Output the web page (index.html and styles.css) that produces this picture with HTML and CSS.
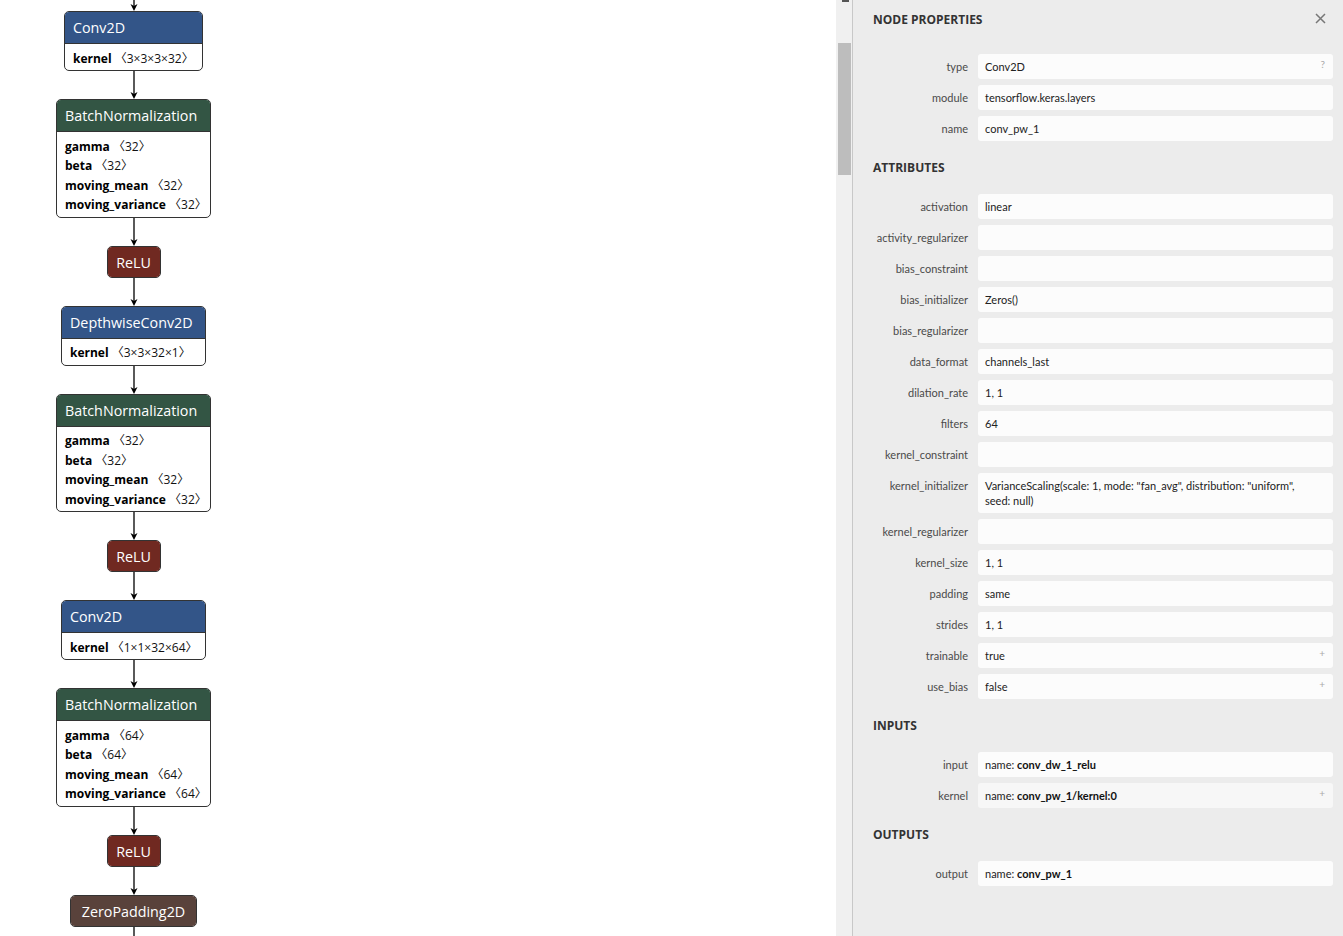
FILE: index.html
```html
<!DOCTYPE html>
<html lang="en">
<head>
<meta charset="utf-8">
<title>Netron - conv_pw_1</title>
<link rel="stylesheet" href="styles.css">
</head>
<body>
<div class="app">
  <main class="graph">
    <div class="flow">
      <svg class="edge edge--top" width="10" height="11" viewBox="0 0 10 11"><line x1="5" y1="0" x2="5" y2="8" /><path d="M1.5 4 L5 11 L8.5 4 L5 6 Z" /></svg>

      <div class="node node--conv1">
        <div class="node-head head--layer">Conv2D</div>
        <div class="node-body"><div class="attr"><b>kernel</b> <span class="shape">〈3×3×3×32〉</span></div></div>
      </div>
      <svg class="edge" width="10" height="28" viewBox="0 0 10 28"><line x1="5" y1="0" x2="5" y2="25" /><path d="M1.5 21 L5 28 L8.5 21 L5 23 Z" /></svg>

      <div class="node node--bn">
        <div class="node-head head--norm">BatchNormalization</div>
        <div class="node-body">
          <div class="attr"><b>gamma</b> <span class="shape">〈32〉</span></div>
          <div class="attr"><b>beta</b> <span class="shape">〈32〉</span></div>
          <div class="attr"><b>moving_mean</b> <span class="shape">〈32〉</span></div>
          <div class="attr"><b>moving_variance</b> <span class="shape">〈32〉</span></div>
        </div>
      </div>
      <svg class="edge" width="10" height="28" viewBox="0 0 10 28"><line x1="5" y1="0" x2="5" y2="25" /><path d="M1.5 21 L5 28 L8.5 21 L5 23 Z" /></svg>

      <div class="node node--relu">
        <div class="node-head head--act head--solo">ReLU</div>
      </div>
      <svg class="edge" width="10" height="28" viewBox="0 0 10 28"><line x1="5" y1="0" x2="5" y2="25" /><path d="M1.5 21 L5 28 L8.5 21 L5 23 Z" /></svg>

      <div class="node node--dw">
        <div class="node-head head--layer">DepthwiseConv2D</div>
        <div class="node-body"><div class="attr"><b>kernel</b> <span class="shape">〈3×3×32×1〉</span></div></div>
      </div>
      <svg class="edge" width="10" height="28" viewBox="0 0 10 28"><line x1="5" y1="0" x2="5" y2="25" /><path d="M1.5 21 L5 28 L8.5 21 L5 23 Z" /></svg>

      <div class="node node--bn">
        <div class="node-head head--norm">BatchNormalization</div>
        <div class="node-body">
          <div class="attr"><b>gamma</b> <span class="shape">〈32〉</span></div>
          <div class="attr"><b>beta</b> <span class="shape">〈32〉</span></div>
          <div class="attr"><b>moving_mean</b> <span class="shape">〈32〉</span></div>
          <div class="attr"><b>moving_variance</b> <span class="shape">〈32〉</span></div>
        </div>
      </div>
      <svg class="edge" width="10" height="28" viewBox="0 0 10 28"><line x1="5" y1="0" x2="5" y2="25" /><path d="M1.5 21 L5 28 L8.5 21 L5 23 Z" /></svg>

      <div class="node node--relu">
        <div class="node-head head--act head--solo">ReLU</div>
      </div>
      <svg class="edge" width="10" height="28" viewBox="0 0 10 28"><line x1="5" y1="0" x2="5" y2="25" /><path d="M1.5 21 L5 28 L8.5 21 L5 23 Z" /></svg>

      <div class="node node--conv2">
        <div class="node-head head--layer">Conv2D</div>
        <div class="node-body"><div class="attr"><b>kernel</b> <span class="shape">〈1×1×32×64〉</span></div></div>
      </div>
      <svg class="edge" width="10" height="28" viewBox="0 0 10 28"><line x1="5" y1="0" x2="5" y2="25" /><path d="M1.5 21 L5 28 L8.5 21 L5 23 Z" /></svg>

      <div class="node node--bn">
        <div class="node-head head--norm">BatchNormalization</div>
        <div class="node-body">
          <div class="attr"><b>gamma</b> <span class="shape">〈64〉</span></div>
          <div class="attr"><b>beta</b> <span class="shape">〈64〉</span></div>
          <div class="attr"><b>moving_mean</b> <span class="shape">〈64〉</span></div>
          <div class="attr"><b>moving_variance</b> <span class="shape">〈64〉</span></div>
        </div>
      </div>
      <svg class="edge" width="10" height="28" viewBox="0 0 10 28"><line x1="5" y1="0" x2="5" y2="25" /><path d="M1.5 21 L5 28 L8.5 21 L5 23 Z" /></svg>

      <div class="node node--relu">
        <div class="node-head head--act head--solo">ReLU</div>
      </div>
      <svg class="edge" width="10" height="28" viewBox="0 0 10 28"><line x1="5" y1="0" x2="5" y2="25" /><path d="M1.5 21 L5 28 L8.5 21 L5 23 Z" /></svg>

      <div class="node node--pad">
        <div class="node-head head--tensor head--solo">ZeroPadding2D</div>
      </div>
      <svg class="edge" width="10" height="10" viewBox="0 0 10 10"><line x1="5" y1="0" x2="5" y2="10" /></svg>
    </div>
  </main>

  <aside class="sidebar">
    <div class="scrollbar">
      <div class="scroll-arrow"></div>
      <div class="scroll-thumb"></div>
    </div>
    <div class="panel">
      <div class="panel-header">
        <span class="panel-title">Node Properties</span>
        <svg class="close" width="11" height="11" viewBox="0 0 11 11"><path d="M1 1 L10 10 M10 1 L1 10" /></svg>
      </div>

      <div class="props">
        <div class="row"><div class="label">type</div><div class="value">Conv2D<span class="hint">?</span></div></div>
        <div class="row"><div class="label">module</div><div class="value">tensorflow.keras.layers</div></div>
        <div class="row"><div class="label">name</div><div class="value">conv_pw_1</div></div>
      </div>

      <div class="section-title">Attributes</div>
      <div class="props">
        <div class="row"><div class="label">activation</div><div class="value">linear</div></div>
        <div class="row"><div class="label">activity_regularizer</div><div class="value"></div></div>
        <div class="row"><div class="label">bias_constraint</div><div class="value"></div></div>
        <div class="row"><div class="label">bias_initializer</div><div class="value">Zeros()</div></div>
        <div class="row"><div class="label">bias_regularizer</div><div class="value"></div></div>
        <div class="row"><div class="label">data_format</div><div class="value">channels_last</div></div>
        <div class="row"><div class="label">dilation_rate</div><div class="value">1, 1</div></div>
        <div class="row"><div class="label">filters</div><div class="value">64</div></div>
        <div class="row"><div class="label">kernel_constraint</div><div class="value"></div></div>
        <div class="row"><div class="label">kernel_initializer</div><div class="value">VarianceScaling(scale: 1, mode: "fan_avg", distribution: "uniform", seed: null)</div></div>
        <div class="row"><div class="label">kernel_regularizer</div><div class="value"></div></div>
        <div class="row"><div class="label">kernel_size</div><div class="value">1, 1</div></div>
        <div class="row"><div class="label">padding</div><div class="value">same</div></div>
        <div class="row"><div class="label">strides</div><div class="value">1, 1</div></div>
        <div class="row"><div class="label">trainable</div><div class="value">true<span class="hint">+</span></div></div>
        <div class="row"><div class="label">use_bias</div><div class="value">false<span class="hint">+</span></div></div>
      </div>

      <div class="section-title">Inputs</div>
      <div class="props">
        <div class="row"><div class="label">input</div><div class="value">name: <b>conv_dw_1_relu</b></div></div>
        <div class="row"><div class="label">kernel</div><div class="value value--muted">name: <b>conv_pw_1/kernel:0</b><span class="hint">+</span></div></div>
      </div>

      <div class="section-title">Outputs</div>
      <div class="props">
        <div class="row"><div class="label">output</div><div class="value">name: <b>conv_pw_1</b></div></div>
      </div>
    </div>
  </aside>
</div>
</body>
</html>
```

FILE: styles.css
```css
* { box-sizing: border-box; }

html, body {
  margin: 0;
  padding: 0;
  background: #ffffff;
  font-family: "Open Sans", "Noto Sans", "DejaVu Sans", sans-serif;
}

.app {
  display: flex;
  width: 1343px;
  height: 936px;
  overflow: hidden;
}

/* ---------- graph ---------- */
.graph {
  width: 836px;
  height: 936px;
  background: #ffffff;
  overflow: hidden;
}

.flow {
  width: 267px;
  display: flex;
  flex-direction: column;
  align-items: center;
}

.edge {
  display: block;
  flex: none;
}
.edge line {
  stroke: #000;
  stroke-width: 1.3;
}
.edge path {
  fill: #000;
}

.node {
  flex: none;
  border: 1px solid #333;
  border-radius: 5px;
  overflow: hidden;
  background: #fff;
  color: #000;
}

.node--conv1 { width: 139px; }
.node--conv2 { width: 145px; }
.node--dw    { width: 145px; }
.node--bn    { width: 155px; }
.node--relu  { width: 54px; }
.node--pad   { width: 127px; }

.node-head {
  height: 31px;
  line-height: 31px;
  padding: 0 8px;
  color: #fff;
  font-size: 14.3px;
  white-space: nowrap;
}
.head--solo {
  height: 30px;
  line-height: 31px;
  text-align: center;
  padding: 0;
}
.head--layer  { background: #335588; }
.head--norm   { background: #335544; }
.head--act    { background: #702921; }
.head--tensor { background: #59423b; }

.node-body {
  border-top: 1px solid #333;
  padding: 4.5px 8px 2px;
}
.attr {
  height: 19.5px;
  font-size: 12px;
  line-height: 19.5px;
  white-space: nowrap;
}
.attr b {
  font-weight: 700;
}
.shape {
  font-family: "Open Sans", "Noto Sans CJK SC", sans-serif;
  font-size: 12px;
  line-height: 19.5px;
  color: #111;
}

/* ---------- sidebar ---------- */
.sidebar {
  width: 507px;
  height: 936px;
  display: flex;
  background: #ececec;
}

.scrollbar {
  width: 17px;
  flex: none;
  background: #f0f0f0;
  border-right: 1px solid #c8c8c8;
  display: flex;
  flex-direction: column;
}
.scroll-arrow {
  width: 7px;
  height: 2px;
  margin-left: 6px;
  background: #555;
}
.scroll-thumb {
  width: 13px;
  height: 132px;
  margin-top: 41px;
  margin-left: 2px;
  background: #bdbdbd;
}

.panel {
  flex: 1;
  padding: 0 10px 0 20px;
  color: #222;
  font-family: "Lato", "Open Sans", sans-serif;
}

.panel-header {
  display: flex;
  align-items: center;
  justify-content: space-between;
  height: 39px;
  margin-bottom: 15px;
}
.panel-title,
.section-title {
  font-family: "Open Sans", "Noto Sans", sans-serif;
  font-size: 12px;
  font-weight: 700;
  text-transform: uppercase;
  color: #333;
  line-height: 15px;
}
.close {
  margin-right: 7px;
  margin-top: -3px;
}
.close path {
  stroke: #777;
  stroke-width: 1.5;
  fill: none;
}

.section-title {
  padding: 13px 0 19px;
}

.row {
  display: grid;
  grid-template-columns: 95px 1fr;
  column-gap: 10px;
  margin-bottom: 6px;
}
.label {
  display: flex;
  justify-content: flex-end;
  white-space: nowrap;
  font-size: 11px;
  line-height: 15px;
  padding-top: 5px;
  color: #4a4a4a;
}
.value {
  position: relative;
  min-height: 25px;
  padding: 5px 22px 5px 7px;
  background: #fcfcfc;
  border-radius: 3px;
  font-size: 11px;
  line-height: 15px;
  color: #222;
}
.value b {
  font-weight: 700;
  color: #111;
}
.value--muted {
  background: #f7f7f7;
}
.hint {
  position: absolute;
  right: 8px;
  top: 4px;
  font-size: 10px;
  line-height: 12px;
  color: #aaa;
}
```
